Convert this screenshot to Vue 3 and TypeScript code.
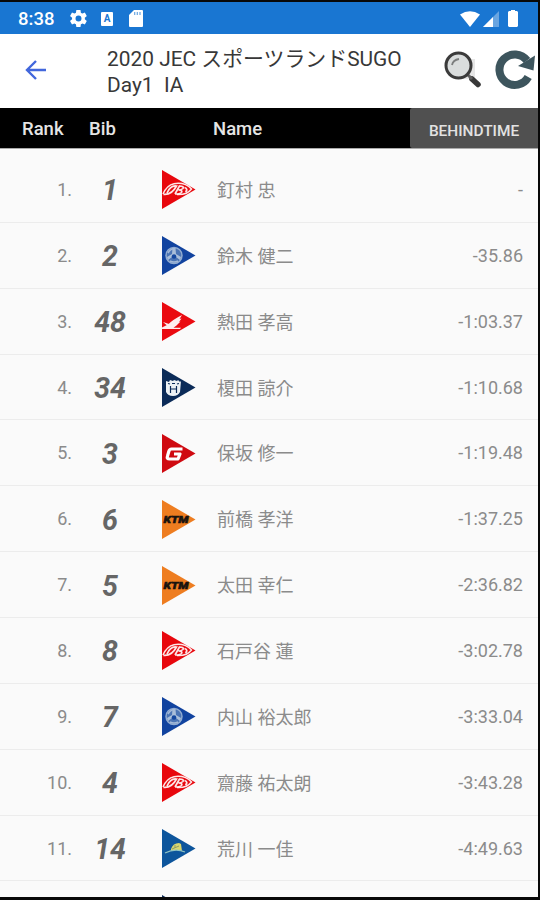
<script setup lang="ts">
type Brand = 'beta' | 'yamaha' | 'honda' | 'husqvarna' | 'gasgas' | 'ktm' | 'sherco'

interface Rider {
  rank: number
  bib: number
  brand: Brand
  name: string
  behind: string
}

const flagColors: Record<Brand, string> = {
  beta: '#e8070d',
  yamaha: '#11439f',
  honda: '#ea0a10',
  husqvarna: '#0b2b58',
  gasgas: '#cf0a11',
  ktm: '#ee7d20',
  sherco: '#0d559c',
}

const riders: Rider[] = [
  { rank: 1, bib: 1, brand: 'beta', name: '釘村 忠', behind: '-' },
  { rank: 2, bib: 2, brand: 'yamaha', name: '鈴木 健二', behind: '-35.86' },
  { rank: 3, bib: 48, brand: 'honda', name: '熱田 孝高', behind: '-1:03.37' },
  { rank: 4, bib: 34, brand: 'husqvarna', name: '榎田 諒介', behind: '-1:10.68' },
  { rank: 5, bib: 3, brand: 'gasgas', name: '保坂 修一', behind: '-1:19.48' },
  { rank: 6, bib: 6, brand: 'ktm', name: '前橋 孝洋', behind: '-1:37.25' },
  { rank: 7, bib: 5, brand: 'ktm', name: '太田 幸仁', behind: '-2:36.82' },
  { rank: 8, bib: 8, brand: 'beta', name: '石戸谷 蓮', behind: '-3:02.78' },
  { rank: 9, bib: 7, brand: 'yamaha', name: '内山 裕太郎', behind: '-3:33.04' },
  { rank: 10, bib: 4, brand: 'beta', name: '齋藤 祐太朗', behind: '-3:43.28' },
  { rank: 11, bib: 14, brand: 'sherco', name: '荒川 一佳', behind: '-4:49.63' },
]
</script>

<template>
  <div class="device">
    <div class="screen">
      <header class="status">
        <span class="clock">8:38</span>
        <svg class="gear" viewBox="2 2 20 20"><path fill="#fff" fill-rule="evenodd" d="M19.4 13c.1-.3.1-.7.1-1s0-.7-.1-1l2.1-1.6c.2-.2.2-.4.1-.7l-2-3.400c-.1-.2-.4-.3-.6-.2l-2.500 1c-.5-.4-1.100-.7-1.700-1L14.400 2.400c0-.2-.2-.4-.5-.4h-4c-.2 0-.4.2-.5.4L9 5.100c-.6.3-1.200.6-1.700 1l-2.500-1c-.2-.1-.5 0-.6.2l-2 3.400c-.1.300-.1.500.1.700L4.500 11c0 .3-.1.700-.1 1s0 .7.100 1l-2.200 1.600c-.2.2-.2.400-.1.700l2 3.400c.1.200.4.300.6.200l2.500-1c.5.4 1.100.7 1.700 1l.4 2.700c.1.200.3.400.5.400h4c.3 0 .5-.2.500-.4l.4-2.700c.6-.3 1.200-.6 1.700-1l2.500 1c.2.100.5 0 .6-.2l2-3.400c.1-.3.1-.5-.1-.7zM12 15.500a3.500 3.500 0 1 1 0-7 3.500 3.500 0 0 1 0 7z" /></svg>
        <span class="badge">A</span>
        <svg class="sd" viewBox="0 0 14 17"><path fill="#fff" d="M5 0h8a1 1 0 0 1 1 1v15a1 1 0 0 1-1 1H1a1 1 0 0 1-1-1V5z" /><path stroke="#1976d2" stroke-width="1.200" opacity=".65" d="M5.700 2v3M8.300 2v3M11 2v3" /></svg>
        <svg class="wifi" viewBox="0 0 20 16"><path fill="#fff" d="M0 3.500Q10-3 20 3.500L10 16z" /></svg>
        <svg class="signal" viewBox="0 0 16 16"><path fill="#fff" opacity=".35" d="M16 0v16H0z" /><path fill="#fff" d="M10 6v10H0z" /></svg>
        <svg class="battery" viewBox="0 0 10 17"><path fill="#fff" d="M3 0h4v1h2l1 1v14l-1 1H1l-1-1V2l1-1h2z" /></svg>
      </header>

      <div class="appbar">
        <svg class="back" viewBox="0 0 22 20"><path fill="none" stroke="#4267dc" stroke-width="2.400" d="M21 10H2M11 1L2 10l9 9" /></svg>
        <h1 class="title">2020 JEC スポーツランドSUGO<br />Day1&nbsp; IA</h1>
        <svg class="search" viewBox="0 0 38 38">
          <path fill="#e7e7e7" d="M21 8h10v20H13z" />
          <path stroke="#383838" stroke-width="5.500" stroke-linecap="round" d="M28 28l6 5.500" />
          <path stroke="#606060" stroke-width="3" d="M24 24l4 4" />
          <circle cx="14.500" cy="14.500" r="12.500" fill="#dadddd" stroke="#3b3b3b" stroke-width="3" />
          <path fill="none" stroke="#7b7d7d" stroke-width="1.800" d="M8 14q1-5 7-6" />
        </svg>
        <svg class="reload" viewBox="0 0 40 40">
          <path fill="none" stroke="#3d555d" stroke-width="8" d="M33.200 27A15.300 15.300 0 1 1 32 10.500" />
          <path fill="#3d555d" d="M40 5.500L38.500 20.500 23 16z" />
        </svg>
      </div>

      <div class="columns">
        <span class="col-rank">Rank</span>
        <span class="col-bib">Bib</span>
        <span class="col-name">Name</span>
        <button class="behind-button">BEHINDTIME</button>
      </div>

      <main class="list">
        <div v-for="r in riders" :key="r.rank" class="row">
          <span class="rank">{{ r.rank }}.</span>
          <span class="bib">{{ r.bib }}</span>
          <svg class="flag" viewBox="0 0 34 39">
            <path :fill="flagColors[r.brand]" d="M0 0L33.500 19.500 0 39z" />
            <g v-if="r.brand === 'beta'" fill="none" stroke="#fff" stroke-opacity=".9">
              <path stroke-width="1.500" d="M1 24Q5 15 12 13.700Q23 12 29.500 19Q25 25 15 24.500" />
              <path stroke-width="1.700" d="M1.500 24.300q8 1 13-8.300q-6-1-9.500 7" />
              <path stroke-width="1.700" d="M13 24l4.500-8q5 .3 3.500 2.500-1.500 1.500-4.500 1.500 4.500.3 3 2.500-1.500 1.500-6.500 1.500" />
              <path stroke-width="1.800" d="M22.500 17.500q4 1.500 1 4.500" />
            </g>
            <g v-else-if="r.brand === 'yamaha'">
              <circle cx="12" cy="19.500" r="8" fill="#4b74b4" stroke="#91acd1" stroke-width="1.500" />
              <path fill="#a9bed9" d="M10.500 12h3l.5 6 5 3-1 3-4-3-2-1-2 1-4 3-1-3 5-3z" />
              <path fill="none" stroke="#a4bad8" stroke-width="1.500" d="M6 17q3-5 7-4M8 25q4 2 8 0" />
              <circle cx="12" cy="20.500" r="2.300" fill="#14479f" />
            </g>
            <path v-else-if="r.brand === 'honda'" fill="#fff" fill-opacity=".93" d="M0 25.500l4-2 2-1q5-5 14-9.500l-2.500 4 2-.5-2.500 3.500 1.500-.5-4 4-3 2.200h7.500l-1 1.300H0zM1 20l6 2-2 1.500z" />
            <g v-else-if="r.brand === 'husqvarna'">
              <path fill="#edf2f5" d="M4 13l3 1 1-2 3 1 1-1 3 1 1-1 2 2 1-1-1 11q-2 4-7 4t-7-4z" />
              <path fill="none" stroke="#0b2b58" stroke-width="1.200" d="M6 15.500l2 .5M17 15.500l-2 .5M8.500 18v7M14.500 18v7M8.500 21h6M10 15.500h3" />
            </g>
            <path v-else-if="r.brand === 'gasgas'" fill="none" stroke="#fff" stroke-width="3.200" stroke-linejoin="round" d="M20.500 15H9.500q-2 0-2.700 2.500L5.500 22q-1 3 2 3h8.500l2-5h-6" />
            <text v-else-if="r.brand === 'ktm'" class="ktm" x="1.500" y="22.700" textLength="25" lengthAdjust="spacingAndGlyphs">KTM</text>
            <g v-else>
              <path fill="#d8d66f" d="M9 20q2-6 8-6l2 1 1 7q-5-2-11 0z" />
              <path fill="none" stroke="#91c4c3" stroke-width="1.300" d="M3 24q10-5 20-1" />
              <path fill="none" stroke="#8f9c66" stroke-width="1" d="M10 20l7-3M13 16v3" />
            </g>
          </svg>
          <span class="name">{{ r.name }}</span>
          <span class="behind">{{ r.behind }}</span>
        </div>
        <div class="row next-row">
          <svg class="flag" viewBox="0 0 34 39"><path fill="#0b2b58" d="M0 0L33.500 19.500 0 39z" /></svg>
        </div>
      </main>
    </div>
  </div>
</template>

<style>
body { margin: 0; background: #000; }
</style>

<style scoped>
.device {
  box-sizing: border-box;
  width: 540px;
  height: 900px;
  padding: 2px 2px 3px 0;
  overflow: hidden;
  background: #080808;
  font-family: Roboto, "Noto Sans CJK JP", sans-serif;
}
.screen {
  display: flex;
  flex-direction: column;
  width: 538px;
  height: 895px;
  overflow: hidden;
  background: #fafafa;
}
.status {
  display: flex;
  flex: 0 0 32px;
  align-items: center;
  box-sizing: border-box;
  padding: 1px 20px 0 18px;
  background: #1976d2;
  color: #fff;
}
.clock { width: 52px; padding-top: 1px; font-size: 18.500px; font-weight: 500; }
.gear { width: 17px; height: 17px; }
.badge {
  width: 12px;
  height: 14px;
  margin-left: 14px;
  border-radius: 1px;
  background: #fff;
  color: #1976d2;
  font-size: 10px;
  font-weight: 700;
  line-height: 14px;
  text-align: center;
}
.sd { width: 14px; height: 17px; margin-left: 16px; }
.wifi { width: 20px; height: 16px; margin-left: auto; }
.signal { width: 16px; height: 16px; margin-left: 3px; }
.battery { width: 10px; height: 17px; margin-left: 9px; }
.appbar {
  display: flex;
  flex: 0 0 74px;
  box-sizing: border-box;
  align-items: center;
  padding-left: 25px;
  background: #fff;
}
.back { width: 22px; height: 20px; margin-bottom: 2px; }
.title {
  width: 337px;
  margin: 1px 0 0 60px;
  color: #383838;
  font-size: 20.900px;
  font-weight: 400;
  line-height: 26px;
  white-space: nowrap;
}
.search { width: 38px; height: 38px; margin-bottom: 2px; }
.reload { width: 40px; height: 40px; margin: 0 0 2px 13px; flex: none; }
.columns {
  display: flex;
  flex: 0 0 40px;
  align-items: center;
  border-bottom: 1px solid #aaa;
  background: #000;
  color: #e5e5e5;
  font-size: 18.500px;
  font-weight: 500;
}
.columns span { padding-top: 1px; }
.columns .col-rank { width: 67px; padding-left: 22px; }
.col-bib { width: 124px; }
.col-name { width: 197px; }
.behind-button {
  width: 128px;
  height: 40px;
  padding: 6px 0 0;
  border: 0;
  border-radius: 2px 0 0 2px;
  background: #505050;
  color: #e2e2e2;
  font: 500 15.400px Roboto, sans-serif;
}
.list { flex: 1; padding-top: 8px; overflow: hidden; }
.row {
  display: grid;
  grid-template-columns: 72px 76px 69px 1fr 110px;
  align-items: center;
  box-sizing: border-box;
  height: 65.860px;
  padding-right: 15px;
  border-bottom: 1px solid #ececec;
  color: #8b8b8b;
  font-size: 18px;
}
.rank { text-align: right; }
.bib {
  padding-top: 3px;
  color: #666;
  font-size: 28.500px;
  font-style: italic;
  font-weight: 700;
  text-align: center;
}
.flag { width: 34px; height: 39px; margin: 1px 0 0 14px; }
.ktm {
  fill: #19130f;
  stroke: #19130f;
  stroke-width: .5px;
  font-size: 9px;
  font-style: italic;
  font-weight: 900;
}
.name { padding-bottom: 1px; color: #8b8b8b; font-size: 18px; white-space: nowrap; }
.behind { text-align: right; }
.next-row .flag { grid-column: 3; }
</style>
